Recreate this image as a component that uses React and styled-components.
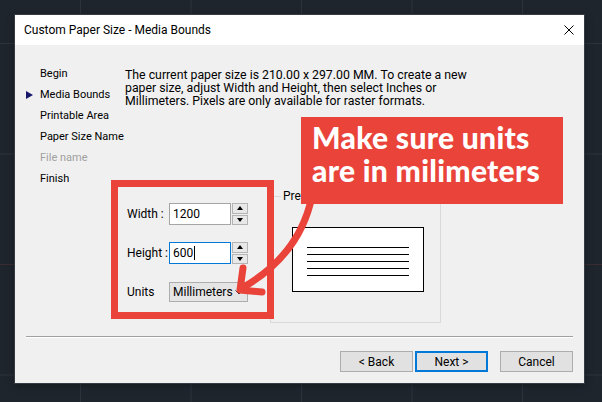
import React from "react";
import styled, { createGlobalStyle } from "styled-components";

const GlobalStyle = createGlobalStyle`
  html, body {
    margin: 0;
    padding: 0;
  }
  body {
    width: 602px;
    height: 402px;
    overflow: hidden;
    font-family: Roboto, "Liberation Sans", sans-serif;
    font-size: 12px;
    color: #000;
  }
`;

const ANNOTATION_RED = "#e9433a";

const navSteps = [
  { label: "Begin" },
  { label: "Media Bounds", current: true },
  { label: "Printable Area" },
  { label: "Paper Size Name" },
  { label: "File name", disabled: true },
  { label: "Finish" },
];

function App() {
  return (
    <>
      <GlobalStyle />
      <Desktop>
        <Dialog>
          <TitleBar>
            <Title>Custom Paper Size - Media Bounds</Title>
            <CloseIcon viewBox="0 0 10 10">
              <path d="M0.5 0.5 L9.5 9.5 M9.5 0.5 L0.5 9.5" />
            </CloseIcon>
          </TitleBar>

          <Body>
            <Nav>
              {navSteps.map((step) => (
                <NavItem key={step.label} $disabled={step.disabled}>
                  <Marker>{step.current && <Triangle />}</Marker>
                  {step.label}
                </NavItem>
              ))}
            </Nav>

            <Main>
              <Intro>
                <IntroLine>
                  The current paper size is 210.00 x 297.00 MM. To create a new
                </IntroLine>
                <IntroLine>
                  paper size, adjust Width and Height, then select Inches or
                </IntroLine>
                <IntroLine>
                  Millimeters. Pixels are only available for raster formats.
                </IntroLine>
              </Intro>

              <GroupRow>
                <PaperGroup>
                  <FieldLabel>Width :</FieldLabel>
                  <NumberField>
                    <TextBox>1200</TextBox>
                    <Spinner>
                      <SpinButton>
                        <Arrow $dir="up" />
                      </SpinButton>
                      <SpinButton>
                        <Arrow $dir="down" />
                      </SpinButton>
                    </Spinner>
                  </NumberField>

                  <FieldLabel>Height :</FieldLabel>
                  <NumberField>
                    <TextBox $focused>
                      600
                      <Caret />
                    </TextBox>
                    <Spinner>
                      <SpinButton>
                        <Arrow $dir="up" />
                      </SpinButton>
                      <SpinButton>
                        <Arrow $dir="down" />
                      </SpinButton>
                    </Spinner>
                  </NumberField>

                  <FieldLabel>Units</FieldLabel>
                  <Select>
                    Millimeters
                    <Chevron viewBox="0 0 8 5">
                      <path d="M0.5 0.5 L4 4 L7.5 0.5" />
                    </Chevron>
                  </Select>
                </PaperGroup>

                <PreviewGroup>
                  <legend>Preview</legend>
                  <PaperSheet>
                    {[0, 1, 2, 3, 4].map((i) => (
                      <PaperLine key={i} />
                    ))}
                  </PaperSheet>
                </PreviewGroup>
              </GroupRow>
            </Main>
          </Body>

          <Footer>
            <Separator />
            <ButtonRow>
              <Button>&lt; Back</Button>
              <Button $default>Next &gt;</Button>
              <Button $gap>Cancel</Button>
            </ButtonRow>
          </Footer>
        </Dialog>

        <Highlight />
        <Callout>
          Make sure units
          <br />
          are in milimeters
        </Callout>
        <CalloutArrow viewBox="0 0 602 402">
          <path d="M312 196 Q300 255 242 288" />
          <path d="M243 268 L240 290 L262 292" />
        </CalloutArrow>
      </Desktop>
    </>
  );
}

export default App;

const Desktop = styled.div`
  position: relative;
  box-sizing: border-box;
  width: 602px;
  height: 402px;
  padding: 15px 18px 19px 15px;
  background-color: #1f252d;
  background-image: linear-gradient(
      to bottom,
      transparent 264px,
      #3a2c31 264px,
      #3a2c31 265px,
      transparent 265px
    ),
    linear-gradient(to right, #2c333c 1px, transparent 1px),
    linear-gradient(to bottom, #2c333c 1px, transparent 1px);
  background-size: 100% 100%, 110.5px 110.5px, 110.5px 110.5px;
  background-position: 0 0, 80px 0, 0 43px;
`;

const Dialog = styled.div`
  height: 100%;
  display: flex;
  flex-direction: column;
  background: #f0f0f0;
  box-shadow: 0 0 0 1px #353b44, 0 2px 8px rgba(0, 0, 0, 0.35);
`;

const TitleBar = styled.div`
  height: 30px;
  flex-shrink: 0;
  display: flex;
  align-items: center;
  justify-content: space-between;
  padding: 0 10px 0 9px;
  background: #fff;
`;

const Title = styled.span`
  font-size: 12px;
`;

const CloseIcon = styled.svg`
  width: 10px;
  height: 10px;
  fill: none;
  stroke: #000;
  stroke-width: 1;
`;

const Body = styled.div`
  flex: 1;
  display: flex;
  padding: 18px 0 0 11px;
`;

const Nav = styled.ul`
  width: 93px;
  margin: 0;
  padding: 0;
  list-style: none;
  font-size: 11px;
`;

const NavItem = styled.li`
  height: 21px;
  display: flex;
  align-items: center;
  white-space: nowrap;
  color: ${(p) => (p.$disabled ? "#a0a0a0" : "#000")};
`;

const Marker = styled.span`
  width: 14px;
  flex-shrink: 0;
  display: flex;
  align-items: center;
`;

const Triangle = styled.span`
  width: 0;
  height: 0;
  border-top: 4.5px solid transparent;
  border-bottom: 4.5px solid transparent;
  border-left: 7px solid #16166b;
`;

const Main = styled.div`
  flex: 1;
  display: flex;
  flex-direction: column;
`;

const Intro = styled.div`
  margin: 6px 0 0 6px;
  display: flex;
  flex-direction: column;
  gap: 1px;
  font-size: 12.3px;
`;

const IntroLine = styled.span`
  height: 12px;
  line-height: 12px;
  white-space: nowrap;
`;

const GroupRow = styled.div`
  display: flex;
  align-items: flex-start;
  margin-top: 82px;
`;

const PaperGroup = styled.div`
  width: 151px;
  box-sizing: border-box;
  padding: 14px 0 0 8px;
  display: grid;
  grid-template-columns: 42px auto;
  grid-auto-rows: 22px;
  row-gap: 17px;
  align-items: center;
`;

const FieldLabel = styled.span`
  white-space: nowrap;
`;

const NumberField = styled.div`
  display: flex;
  height: 22px;
`;

const TextBox = styled.div`
  width: 62px;
  box-sizing: border-box;
  display: flex;
  align-items: center;
  padding-left: 3px;
  background: #fff;
  border: 1px solid ${(p) => (p.$focused ? "#0078d7" : "#a5a5a5")};
`;

const Caret = styled.span`
  width: 1px;
  height: 14px;
  margin-left: 1px;
  background: #000;
`;

const Spinner = styled.div`
  width: 16px;
  margin-left: 1px;
  display: flex;
  flex-direction: column;
  gap: 1px;
`;

const SpinButton = styled.div`
  flex: 1;
  display: flex;
  align-items: center;
  justify-content: center;
  background: #e8e8e8;
  border: 1px solid #b4b4b4;
`;

const Arrow = styled.span`
  width: 0;
  height: 0;
  border-left: 3.5px solid transparent;
  border-right: 3.5px solid transparent;
  ${(p) =>
    p.$dir === "up"
      ? "border-bottom: 4px solid #000;"
      : "border-top: 4px solid #000;"}
`;

const Select = styled.div`
  width: 79px;
  height: 20px;
  box-sizing: border-box;
  display: flex;
  align-items: center;
  justify-content: space-between;
  padding: 0 4px 0 3px;
  background: #e5e5e5;
  border: 1px solid #adadad;
`;

const Chevron = styled.svg`
  width: 8px;
  height: 5px;
  fill: none;
  stroke: #333;
  stroke-width: 1;
`;

const PreviewGroup = styled.fieldset`
  width: 171px;
  height: 134px;
  box-sizing: border-box;
  margin: 0;
  padding: 0;
  border: 1px solid #d9d9d9;

  legend {
    margin-left: 10px;
    padding: 0 2px;
    line-height: 14px;
  }
`;

const PaperSheet = styled.div`
  width: 132px;
  height: 65px;
  box-sizing: border-box;
  margin: 24px 0 0 21px;
  padding: 19px 14px 0;
  display: flex;
  flex-direction: column;
  gap: 6px;
  background: #fff;
  border: 1px solid #000;
`;

const PaperLine = styled.div`
  height: 1px;
  background: #000;
`;

const Footer = styled.div`
  flex-shrink: 0;
`;

const Separator = styled.div`
  margin: 0 11px;
  border-top: 1px solid #a0a0a0;
  border-bottom: 1px solid #fff;
`;

const ButtonRow = styled.div`
  display: flex;
  justify-content: flex-end;
  gap: 2px;
  padding: 13px 11px 11px;
`;

const Button = styled.div`
  width: 73px;
  height: 21px;
  box-sizing: border-box;
  display: flex;
  align-items: center;
  justify-content: center;
  margin-left: ${(p) => (p.$gap ? "10px" : "0")};
  background: #e1e1e1;
  border: ${(p) => (p.$default ? "2px solid #0078d7" : "1px solid #adadad")};
`;

const Highlight = styled.div`
  position: absolute;
  left: 111px;
  top: 180px;
  width: 163px;
  height: 139px;
  box-sizing: border-box;
  border: 7px solid ${ANNOTATION_RED};
`;

const Callout = styled.div`
  position: absolute;
  left: 301px;
  top: 117px;
  width: 262px;
  height: 87px;
  box-sizing: border-box;
  padding: 4px 0 0 11px;
  background: ${ANNOTATION_RED};
  color: #fff;
  font-family: Lato, "Open Sans", sans-serif;
  font-weight: 900;
  font-size: 30px;
  letter-spacing: 0.3px;
  line-height: 33px;
  white-space: nowrap;
`;

const CalloutArrow = styled.svg`
  position: absolute;
  left: 0;
  top: 0;
  width: 602px;
  height: 402px;
  pointer-events: none;
  fill: none;
  stroke: ${ANNOTATION_RED};
  stroke-width: 7;
  stroke-linecap: round;
  stroke-linejoin: round;
`;
